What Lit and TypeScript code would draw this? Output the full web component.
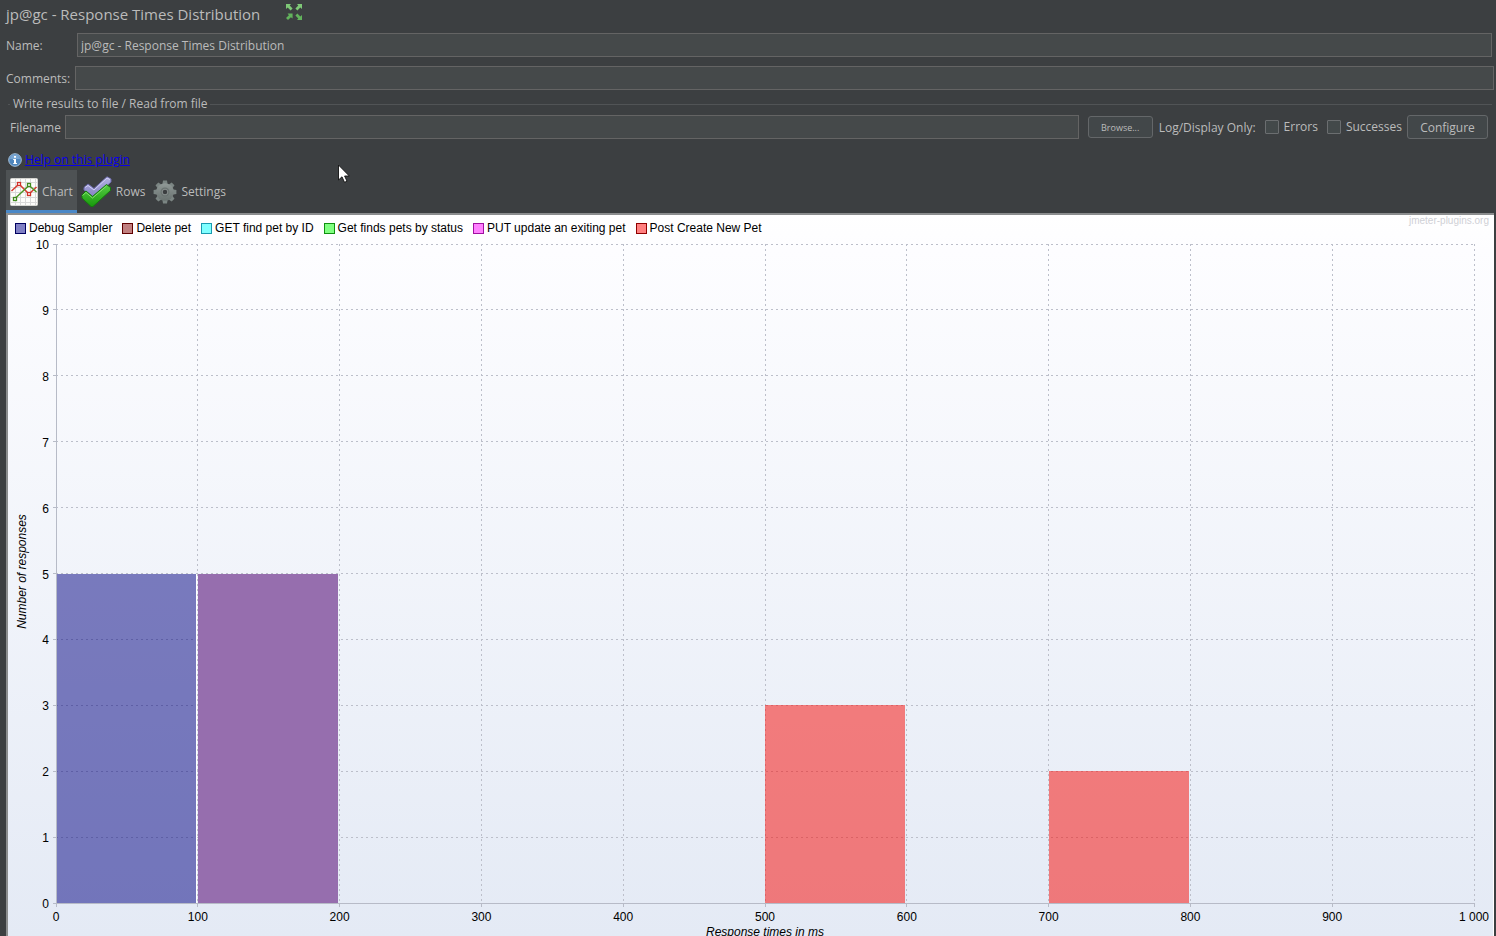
import { LitElement, html, svg, css } from "lit";
import { customElement, property } from "lit/decorators.js";

interface Series {
  name: string;
  fill: string;
  stroke: string;
}

interface Bar {
  from: number;
  count: number;
  fill: string;
}

const SERIES: Series[] = [
  { name: "Debug Sampler", fill: "#8080c4", stroke: "#000060" },
  { name: "Delete pet", fill: "#c08080", stroke: "#600000" },
  { name: "GET find pet by ID", fill: "#80ffff", stroke: "#1a9ab0" },
  { name: "Get finds pets by status", fill: "#80ff80", stroke: "#109010" },
  { name: "PUT update an exiting pet", fill: "#ff80ff", stroke: "#a010a0" },
  { name: "Post Create New Pet", fill: "#ff8080", stroke: "#900000" },
];

const BARS: Bar[] = [
  { from: 0, count: 5, fill: "rgba(0, 0, 128, 0.5)" },
  { from: 100, count: 5, fill: "#966eae" },
  { from: 500, count: 3, fill: "rgba(248, 6, 0, 0.5)" },
  { from: 700, count: 2, fill: "rgba(248, 6, 0, 0.5)" },
];

const MAX_MS = 1000;
const MAX_COUNT = 10;

@customElement("distribution-chart")
export class DistributionChart extends LitElement {
  @property({ attribute: false }) series: Series[] = SERIES;
  @property({ attribute: false }) bars: Bar[] = BARS;

  static styles = css`
    :host {
      display: flex;
      flex-direction: column;
      min-height: 0;
      color: #000;
      font: 12px/16px "Liberation Sans", Arial, sans-serif;
      background: linear-gradient(#fff, #fdfdff 5%, #e4eaf5);
      border-right: 1px solid #fff;
      overflow: hidden;
    }
    .top {
      display: flex;
      justify-content: space-between;
      height: 29px;
    }
    .legend {
      display: flex;
      gap: 10px;
      margin: 0;
      padding: 5px 0 0 7px;
      list-style: none;
    }
    .entry {
      display: flex;
      align-items: center;
      height: 16px;
      gap: 3px;
      white-space: nowrap;
    }
    .swatch {
      width: 11px;
      height: 11px;
      flex: none;
    }
    .mark {
      padding-right: 4px;
      color: #cfd0d6;
      font-size: 10px;
      line-height: 11px;
    }
    .plot {
      flex: 1;
      min-height: 0;
      display: flex;
      padding: 0 19px 33px 48px;
    }
    .canvas {
      width: 100%;
      height: 100%;
      overflow: visible;
      display: block;
    }
    .nested {
      overflow: visible;
    }
    .grid {
      stroke: #bcbfca;
      stroke-width: 1;
      stroke-dasharray: 2 3;
      shape-rendering: crispEdges;
    }
    .axis {
      stroke: #b7bbc7;
      stroke-width: 1;
      shape-rendering: crispEdges;
    }
    .gap {
      stroke: #fff;
      shape-rendering: crispEdges;
    }
    .title {
      font-style: italic;
      text-anchor: middle;
    }
    .tick-x {
      text-anchor: middle;
    }
    .tick-y {
      text-anchor: end;
    }
  `;

  private gridX(i: number) {
    const x = `${i * 10}%`;
    return svg`
      <line class="grid" x1=${x} x2=${x} y1="0" y2="100%"></line>
      <svg class="nested" x=${x} y="100%">
        <line class="axis" x1="0" x2="0" y1="0" y2="4"></line>
        <text class="tick-x" x="0" y="18">${i === 10 ? "1 000" : i * 100}</text>
      </svg>`;
  }

  private gridY(i: number) {
    const y = `${100 - i * 10}%`;
    return svg`
      <line class="grid" x1="0" x2="100%" y1=${y} y2=${y}></line>
      <svg class="nested" x="0" y=${y}>
        <line class="axis" x1="-3" x2="0" y1="0" y2="0"></line>
        <text class="tick-y" x="-7" y="5">${i}</text>
      </svg>`;
  }

  render() {
    const steps = Array.from({ length: 11 }, (_, i) => i);
    return html`
      <div class="top">
        <ul class="legend">
          ${this.series.map(
            (s) => html`<li class="entry">
              <svg class="swatch" viewBox="0 0 11 11">
                <rect x="0.5" y="0.5" width="10" height="10" fill=${s.fill} stroke=${s.stroke}></rect>
              </svg>
              <span>${s.name}</span>
            </li>`
          )}
        </ul>
        <span class="mark">jmeter-plugins.org</span>
      </div>
      <div class="plot">
        <svg class="canvas" role="img" aria-label="Response times distribution">
          ${steps.map((i) => this.gridX(i))} ${steps.map((i) => this.gridY(i))}
          ${this.bars.map(
            (b) => svg`<rect
              x=${`${(b.from / MAX_MS) * 100}%`}
              y=${`${100 - (b.count / MAX_COUNT) * 100}%`}
              width="9.9%"
              height=${`${(b.count / MAX_COUNT) * 100}%`}
              fill=${b.fill}
              shape-rendering="crispEdges"></rect>`
          )}
          <line class="gap" x1="9.9%" x2="9.9%" y1="50%" y2="100%"></line>
          <line class="axis" x1="0" x2="0" y1="0" y2="100%"></line>
          <line class="axis" x1="0" x2="100%" y1="100%" y2="100%"></line>
          <svg class="nested" x="0" y="50%">
            <text class="title" transform="translate(-30 -2) rotate(-90)">Number of responses</text>
          </svg>
          <svg class="nested" x="50%" y="100%">
            <text class="title" x="0" y="33">Response times in ms</text>
          </svg>
        </svg>
      </div>
    `;
  }
}

@customElement("app-root")
export class AppRoot extends LitElement {
  static styles = css`
    :host {
      display: flex;
      flex-direction: column;
      box-sizing: border-box;
      height: 100vh;
      overflow: hidden;
      background: #3c3f41;
      color: #bbb;
      font: 12px/16px "Open Sans", "Noto Sans", sans-serif;
    }
    input,
    button {
      box-sizing: border-box;
      margin: 0;
      font: inherit;
      color: inherit;
    }
    .heading {
      display: flex;
      align-items: flex-start;
      gap: 26px;
      height: 33px;
      padding: 0 6px;
      box-sizing: border-box;
    }
    .heading h1 {
      margin: 0;
      font-size: 15px;
      line-height: 28px;
      font-weight: 400;
    }
    .expand {
      padding: 4px 0 0;
      border: 0;
      background: none;
      display: flex;
    }
    .row {
      display: flex;
      align-items: center;
      padding: 0 4px 0 6px;
      margin-bottom: 9px;
    }
    .row.comments {
      padding-right: 2px;
      margin-bottom: 6px;
    }
    .row label {
      width: 71px;
      flex: none;
      padding-top: 2px;
    }
    .row.comments label {
      width: 69px;
    }
    .text {
      flex: 1;
      min-width: 0;
      height: 24px;
      padding: 0 3px;
      background: #45494a;
      border: 1px solid #646464;
      border-radius: 0;
      outline: none;
    }
    .file {
      margin: 0 4px 0 8px;
      padding: 3px 4px 0 2px;
      border: 0 solid #515456;
      border-top-width: 1px;
      min-width: 0;
    }
    .file legend {
      margin-left: 0;
      padding: 0 2px 0 3px;
    }
    .file-row {
      display: flex;
      align-items: center;
    }
    .file-row .text {
      margin: 0 9px 0 4px;
    }
    .button {
      border: 1px solid #646769;
      border-radius: 3px;
      background: #424749;
      padding: 1px 0 0;
      flex: none;
    }
    .browse {
      width: 65px;
      height: 22px;
      font-size: 9px;
      margin-right: 6px;
    }
    .configure {
      width: 81px;
      height: 24px;
      margin-left: 5px;
    }
    .check {
      display: flex;
      align-items: center;
      gap: 5px;
      margin-left: 9px;
      padding-bottom: 1px;
      white-space: nowrap;
    }
    .check input {
      appearance: none;
      width: 14px;
      height: 14px;
      border: 1px solid #6b6e70;
      border-radius: 1px;
      background: #43494a;
    }
    .caption {
      padding-top: 2px;
      white-space: nowrap;
    }
    .help {
      display: flex;
      align-items: center;
      gap: 3px;
      height: 16px;
      padding: 13px 8px 2px;
    }
    .help a {
      color: #0a00e8;
    }
    .tabs {
      display: flex;
      padding-left: 6px;
      height: 43px;
      flex: none;
    }
    .tab {
      display: flex;
      align-items: center;
      gap: 4px;
      padding: 3px 4px 0;
      border: 0;
      border-bottom: 3px solid transparent;
      background: none;
    }
    .tab svg {
      flex: none;
    }
    .tab.selected {
      background: #4e5254;
      border-bottom-color: #4a88c7;
    }
    .panel {
      display: flex;
      flex-direction: column;
      flex: 1;
      min-height: 0;
      margin: 0 2px 0 6px;
      border: solid #8b8d8e;
      border-width: 2px 0 0 2px;
    }
    .panel distribution-chart {
      flex: 1;
    }
    .cursor {
      position: absolute;
      left: 337px;
      top: 164px;
      pointer-events: none;
    }
  `;

  private expandIcon() {
    const arrow = svg`<path d="M0 0H5L3.7 1.6L6.6 4.4L4.6 6.4L1.7 3.6L0 5Z"></path>`;
    return html`<svg width="16" height="16" viewBox="0 0 16 16">
      <g fill="#7fc977">${arrow}<g transform="matrix(-1 0 0 1 16 0)">${arrow}</g></g>
      <g fill="#62b35c" transform="matrix(1 0 0 -1 0 16)">
        <path d="M6.600 6.400H1.600L2.900 4.800L0 2L2 0L4.900 2.800L6.600 1.400Z"></path>
      </g>
      <g fill="#62b35c" transform="matrix(-1 0 0 -1 16 16)">${arrow}</g>
    </svg>`;
  }

  private infoIcon() {
    return html`<svg width="14" height="14" viewBox="0 0 14 14">
      <circle cx="7" cy="7" r="6.3" fill="#4f86bd" stroke="#a9c3dc" stroke-width="1"></circle>
      <path d="M2 6a5 4.5 0 0 1 10 0Z" fill="#79a6d2"></path>
      <path d="M6 3h2v1.8H6zM5.2 6H8v4h1v1H5.2v-1H6V7h-.8z" fill="#fff"></path>
    </svg>`;
  }

  private chartIcon() {
    return html`<svg width="28" height="28" viewBox="0 0 28 28">
      <rect x="0.5" y="0.5" width="27" height="27" rx="1" fill="#fcfcfa" stroke="#d4d4d0"></rect>
      <path d="M5.5 1v26M10.5 1v26M15.5 1v26M20.5 1v26M25.5 1v26M1 4.500h26M1 9.500h26M1 14.500h26M1 19.500h26M1 24.500h26" stroke="#d9d9d9"></path>
      <path d="M1.500 13L9 6L19 16L26.500 9" fill="none" stroke="#d63b30" stroke-width="1.500"></path>
      <path d="M4.500 21L19 7.500L26.500 14" fill="none" stroke="#4d9426" stroke-width="1.500"></path>
      <g fill="#fff" stroke-width="1.300">
        <rect x="7.500" y="4.500" width="3" height="3" stroke="#d03028"></rect>
        <rect x="17.500" y="14.500" width="3" height="3" stroke="#d03028"></rect>
        <rect x="17.500" y="5.500" width="3" height="3" stroke="#3f8a1c"></rect>
        <rect x="3.500" y="19.500" width="3" height="3" stroke="#3f8a1c"></rect>
      </g>
    </svg>`;
  }

  private rowsIcon() {
    return html`<svg width="31" height="32" viewBox="0 0 31 32">
      <defs>
        <linearGradient id="violet" x1="0" y1="0" x2="0" y2="1">
          <stop offset="0" stop-color="#b5b3e4"></stop>
          <stop offset="1" stop-color="#8583c4"></stop>
        </linearGradient>
        <linearGradient id="green" x1="0" y1="0" x2="0" y2="1">
          <stop offset="0" stop-color="#57cc45"></stop>
          <stop offset="1" stop-color="#189a0c"></stop>
        </linearGradient>
      </defs>
      <path d="M3 11.500L7 8L13 12.500L26 .800L30 3V6L14.500 20.500H12L3 14Z" fill="url(#violet)" stroke="#6d6bac"></path>
      <path d="M4 11.500L7 9.500L13 14L26 2L29 3.500" fill="none" stroke="#d2d1f3"></path>
      <path d="M1 19L5 15L11.500 20.500L25.500 8.500L29.500 11.500V14.500L12 30.500H10L1 22Z" fill="url(#green)" stroke="#137c0b"></path>
      <path d="M1.500 19.500L5 16.500L11.500 22L25.500 10" fill="none" stroke="#86e26f"></path>
    </svg>`;
  }

  private gearIcon() {
    const teeth = [0, 45, 90, 135, 180, 225, 270, 315];
    return html`<svg width="24" height="24" viewBox="0 0 24 24">
      <defs>
        <linearGradient id="steel" x1="0" y1="0" x2="0" y2="1">
          <stop offset="0" stop-color="#909997"></stop>
          <stop offset="1" stop-color="#68716f"></stop>
        </linearGradient>
      </defs>
      <g fill="#7b8583">
        ${teeth.map(
          (a) => svg`<path d="M9.200 5L10 .600H14L14.800 5Z" transform=${`rotate(${a} 12 12)`}></path>`
        )}
      </g>
      <circle cx="12" cy="12" r="8.800" fill="url(#steel)"></circle>
      <circle cx="12" cy="12" r="4.500" fill="#6a7371"></circle>
      <circle cx="12" cy="12" r="2.800" fill="#3b3e40" stroke="#98a09e" stroke-width=".800"></circle>
    </svg>`;
  }

  render() {
    return html`
      <header class="heading">
        <h1>jp@gc - Response Times Distribution</h1>
        <button class="expand" aria-label="Expand">${this.expandIcon()}</button>
      </header>
      <div class="row">
        <label for="name">Name:</label>
        <input class="text" id="name" type="text" value="jp@gc - Response Times Distribution" />
      </div>
      <div class="row comments">
        <label for="comments">Comments:</label>
        <input class="text" id="comments" type="text" />
      </div>
      <fieldset class="file">
        <legend>Write results to file / Read from file</legend>
        <div class="file-row">
          <label class="caption" for="filename">Filename</label>
          <input class="text" id="filename" type="text" />
          <button class="button browse">Browse...</button>
          <span class="caption">Log/Display Only:</span>
          <label class="check"><input type="checkbox" />Errors</label>
          <label class="check"><input type="checkbox" />Successes</label>
          <button class="button configure">Configure</button>
        </div>
      </fieldset>
      <div class="help">${this.infoIcon()}<a href="#help">Help on this plugin</a></div>
      <nav class="tabs" role="tablist">
        <button class="tab selected" role="tab" aria-selected="true">${this.chartIcon()}Chart</button>
        <button class="tab" role="tab" aria-selected="false">${this.rowsIcon()}Rows</button>
        <button class="tab" role="tab" aria-selected="false">${this.gearIcon()}Settings</button>
      </nav>
      <main class="panel">
        <distribution-chart></distribution-chart>
      </main>
      <svg class="cursor" width="14" height="20" viewBox="0 0 14 20">
        <path d="M1.500 1V16L5 12.800L7.500 18.300L10 17.200L7.600 12H12.300Z" fill="#fff" stroke="#111" stroke-width=".900"></path>
      </svg>
    `;
  }
}
